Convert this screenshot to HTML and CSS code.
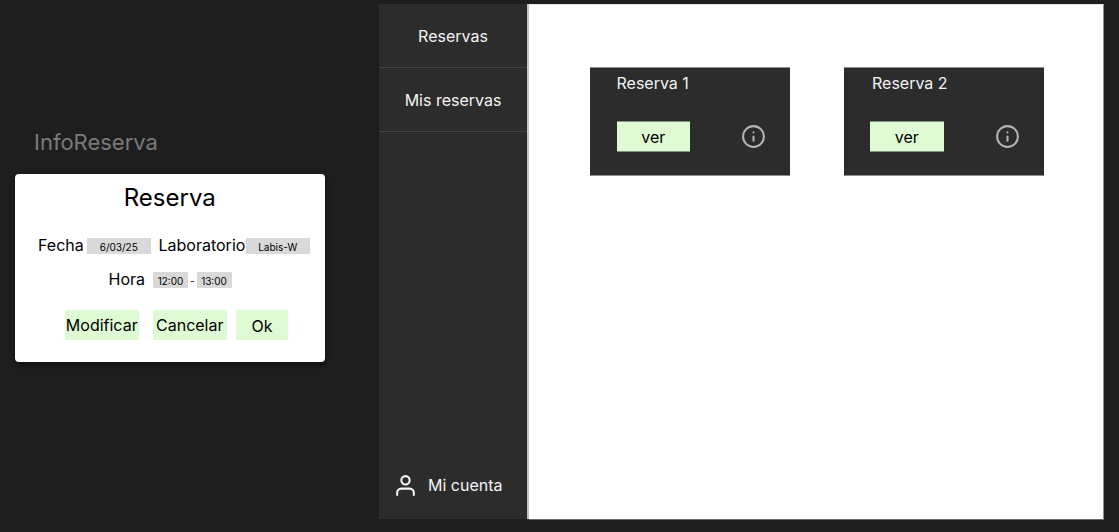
FILE: index.html
```html
<!DOCTYPE html>
<html lang="es">
<head>
<meta charset="utf-8">
<title>Reservas</title>
<link rel="stylesheet" href="styles.css">
</head>
<body>
<div class="canvas">
  <section class="info">
    <h2 class="frame-name"><span>InfoReserva</span></h2>
    <div class="dialog">
      <h1 class="title"><span>Reserva</span></h1>
      <div class="row row-main">
        <span class="label label-date">Fecha</span><span class="chip chip-wide">6/03/25</span>
        <span class="label label-lab">Laboratorio</span><span class="chip chip-wide">Labis-W</span>
      </div>
      <div class="row row-time">
        <span class="label label-time">Hora</span><span class="chip">12:00</span><span class="dash">-</span><span class="chip">13:00</span>
      </div>
      <div class="actions">
        <button class="btn">Modificar</button>
        <button class="btn btn-cancel">Cancelar</button>
        <button class="btn btn-ok">Ok</button>
      </div>
    </div>
  </section>
  <main class="app">
    <nav class="sidebar">
      <a class="item"><span>Reservas</span></a>
      <a class="item"><span>Mis reservas</span></a>
      <a class="account">
        <svg class="user" viewBox="0 0 24 24"><path d="M20 21v-2a4 4 0 0 0-4-4H8a4 4 0 0 0-4 4v2"/><circle cx="12" cy="7" r="4"/></svg>
        <span>Mi cuenta</span>
      </a>
    </nav>
    <div class="content">
      <article class="card">
        <h3 class="card-title"><span>Reserva 1</span></h3>
        <div class="card-row">
          <button class="btn btn-view">ver</button>
          <svg class="about" viewBox="0 0 24 24"><circle cx="12" cy="12" r="10"/><path d="M12 16v-4M12 8h.01"/></svg>
        </div>
      </article>
      <article class="card card-second">
        <h3 class="card-title"><span>Reserva 2</span></h3>
        <div class="card-row">
          <button class="btn btn-view">ver</button>
          <svg class="about" viewBox="0 0 24 24"><circle cx="12" cy="12" r="10"/><path d="M12 16v-4M12 8h.01"/></svg>
        </div>
      </article>
    </div>
  </main>
</div>
</body>
</html>
```
FILE: styles.css
```css
* { box-sizing: border-box; }
body {
  margin: 0;
  background: #1e1e1e;
  font-family: Inter, "Liberation Sans", sans-serif;
  font-size: 16px;
  color: #000;
  overflow: hidden;
}
h1, h2, h3 { margin: 0; font-weight: 400; }
.canvas { display: flex; width: 1119px; height: 532px; }
.info { width: 379px; padding: 128px 0 0 15px; }
.frame-name {
  height: 46px;
  padding-left: 19px;
  font-size: 22px;
  line-height: 29px;
  color: #7a7a7a;
}
.dialog {
  width: 309.5px;
  height: 188px;
  border-radius: 4px;
  background: #fff;
  box-shadow: 0 3px 5px 1px rgba(0, 0, 0, .35);
}
.title {
  height: 64px;
  padding-top: 9px;
  font-size: 24px;
  line-height: 30px;
  text-align: center;
}
.row { display: flex; height: 16px; line-height: 15px; white-space: nowrap; }
.row-main { padding-left: 23px; }
.row-time { padding-left: 93.5px; margin-top: 18px; }
.label-date { width: 49px; }
.label-lab { width: 87.5px; margin-left: 8px; }
.label-time { width: 44.5px; }
.chip {
  width: 35px;
  height: 16px;
  background: #d9d9d9;
  font-size: 10px;
  line-height: 19px;
  text-align: center;
}
.chip-wide { width: 63.5px; }
.dash { width: 8.5px; font-size: 10px; line-height: 19px; text-align: center; }
.actions { display: flex; padding: 22px 0 0 50px; }
.btn {
  display: flex;
  align-items: center;
  justify-content: center;
  width: 73.5px;
  height: 30px;
  padding: 0;
  border: 0;
  background: #dffbd4;
  font: inherit;
  color: #000;
}
.btn-cancel { margin-left: 14.5px; }
.btn-ok { width: 52px; margin-left: 9.5px; padding-top: 2px; }
.btn-view { height: 31px; border: solid #869380; border-width: 1px 0; }
.app {
  display: flex;
  width: 725px;
  height: 516px;
  margin-top: 4px;
}
.sidebar {
  display: flex;
  flex-direction: column;
  width: 150px;
  height: 515px;
  border-right: 2px solid #c4c4c4;
  background: #2c2c2c;
  color: #f3f3f3;
}
.item {
  display: flex;
  align-items: center;
  justify-content: center;
  height: 64px;
  padding-top: 1px;
  border-bottom: 1px solid #444;
}
.account { display: flex; align-items: center; height: 26px; margin: auto 0 21px; padding-left: 14px; }
.user, .about { fill: none; stroke-linecap: round; stroke-linejoin: round; }
.user { width: 25px; height: 25px; margin-right: 10px; stroke: #f3f3f3; stroke-width: 2; }
.content {
  display: flex;
  flex: 1;
  align-items: flex-start;
  padding: 62px 0 0 61px;
  border-top: 1px solid #e4e4e4;
  border-right: 1px solid #8e8e8e;
  border-bottom: 1px solid #6a6a6a;
  background: #fff;
}
.card {
  width: 200px;
  height: 109px;
  padding: 4px 0 0 26.5px;
  border: solid #8c8c8c;
  border-width: 1px 0;
  background: #2c2c2c;
}
.card-second { margin-left: 53.5px; }
.card-title { height: 49px; font-size: 16px; line-height: 22px; color: #f3f3f3; }
.card-second .card-title { padding-left: 2px; }
.card-row { display: flex; align-items: center; }
.about { width: 25px; height: 25px; margin-left: 51px; stroke: #b3b3b3; stroke-width: 2; }
```
